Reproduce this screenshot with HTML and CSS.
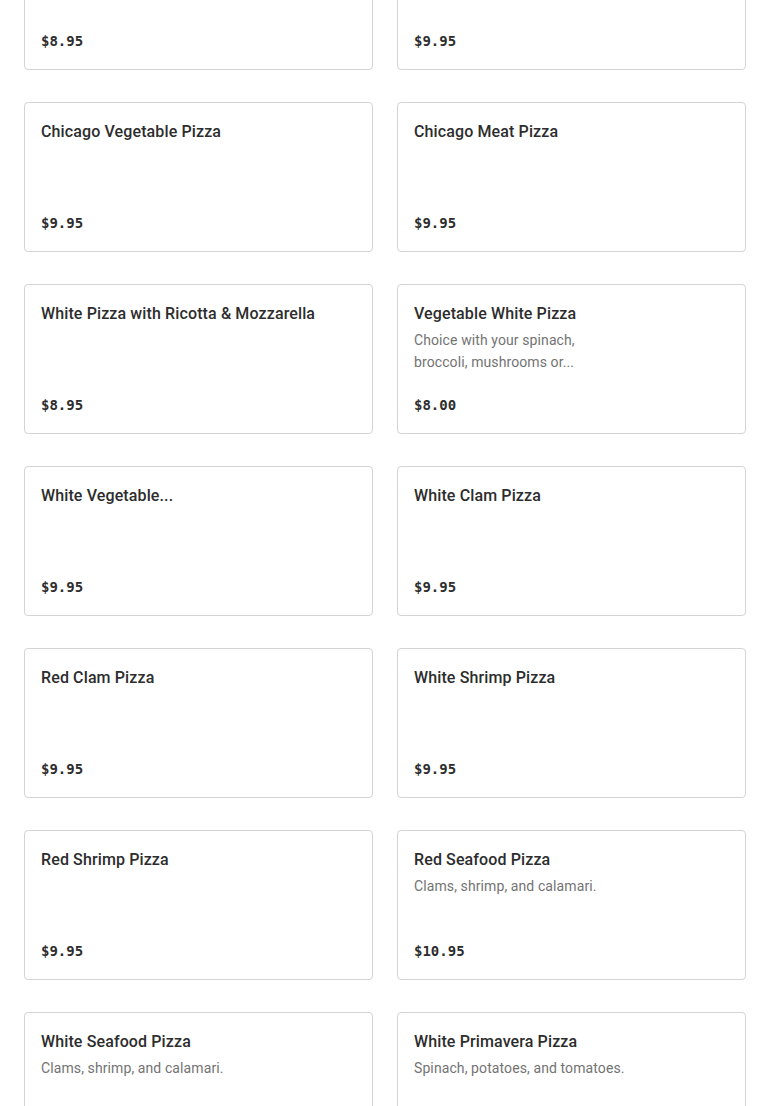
FILE: index.html
```html
<!DOCTYPE html>
<html lang="en">
<head>
<meta charset="utf-8">
<title>Pizza Menu</title>
<link rel="stylesheet" href="styles.css">
</head>
<body>
<main class="menu">
  <div class="card"><div class="title">Chicago Cheese Pizza</div><div class="price">$8.95</div></div>
  <div class="card"><div class="title">Chicago Sausage Pizza</div><div class="price">$9.95</div></div>
  <div class="card"><div class="title">Chicago Vegetable Pizza</div><div class="price">$9.95</div></div>
  <div class="card"><div class="title">Chicago Meat Pizza</div><div class="price">$9.95</div></div>
  <div class="card"><div class="title">White Pizza with Ricotta &amp; Mozzarella</div><div class="price">$8.95</div></div>
  <div class="card"><div class="title">Vegetable White Pizza</div><div class="desc">Choice with your spinach, broccoli, mushrooms or...</div><div class="price">$8.00</div></div>
  <div class="card"><div class="title">White Vegetable...</div><div class="price">$9.95</div></div>
  <div class="card"><div class="title">White Clam Pizza</div><div class="price">$9.95</div></div>
  <div class="card"><div class="title">Red Clam Pizza</div><div class="price">$9.95</div></div>
  <div class="card"><div class="title">White Shrimp Pizza</div><div class="price">$9.95</div></div>
  <div class="card"><div class="title">Red Shrimp Pizza</div><div class="price">$9.95</div></div>
  <div class="card"><div class="title">Red Seafood Pizza</div><div class="desc">Clams, shrimp, and calamari.</div><div class="price">$10.95</div></div>
  <div class="card"><div class="title">White Seafood Pizza</div><div class="desc">Clams, shrimp, and calamari.</div><div class="price">$10.95</div></div>
  <div class="card"><div class="title">White Primavera Pizza</div><div class="desc">Spinach, potatoes, and tomatoes.</div><div class="price">$10.95</div></div>
</main>
</body>
</html>
```
FILE: styles.css
```css
html, body {
  margin: 0;
  padding: 0;
  background: #ffffff;
  overflow: hidden;
}
.menu {
  display: grid;
  grid-template-columns: 1fr 1fr;
  column-gap: 24px;
  row-gap: 32px;
  padding: 0 24px;
  margin-top: -80px;
}
.card {
  box-sizing: border-box;
  height: 150px;
  border: 1px solid #d4d4d4;
  border-radius: 4px;
  padding: 17px 16px 16px;
  display: flex;
  flex-direction: column;
  background: #fff;
}
.title {
  font-family: Roboto, "Noto Sans", sans-serif;
  font-size: 16px;
  font-weight: 500;
  line-height: 24px;
  letter-spacing: 0.12px;
  color: #2d2d2d;
}
.desc {
  font-family: Roboto, "Noto Sans", sans-serif;
  font-size: 14px;
  line-height: 22px;
  letter-spacing: 0.1px;
  color: #737373;
  margin-top: 3px;
  max-width: 212px;
}
.price {
  margin-top: auto;
  padding-top: 1px;
  font-family: "DejaVu Sans Mono", monospace;
  font-size: 14px;
  font-weight: 700;
  line-height: 24px;
  color: #2d2d2d;
}
```
